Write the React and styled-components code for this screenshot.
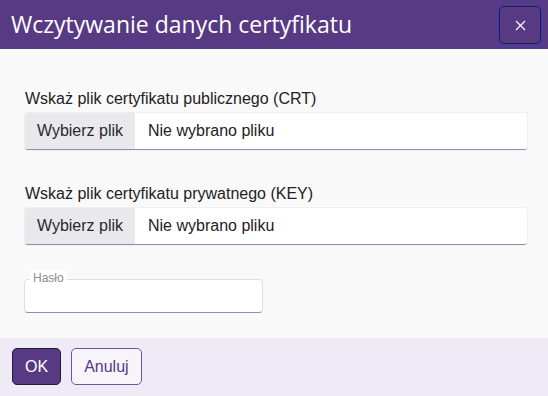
import React from "react";
import styled, {createGlobalStyle} from "styled-components";

const Global = createGlobalStyle`
	html, body {
		margin:0;
		padding:0;
		background:#f9f9f9;
	}
	body{
		font-family:"Liberation Sans", Arial, sans-serif;
	}
`;

const Dialog = styled.div`
	width:548px;
	height:396px;
	display:flex;
	flex-direction:column;
	background:#f9f9f9;
	overflow:hidden;
`;

const Header = styled.div`
	height:49px;
	background:#583a84;
	display:flex;
	align-items:center;
	justify-content:space-between;
	padding:0 7px 0 11px;
	box-sizing:border-box;
	flex-shrink:0;
`;

const Title = styled.h1`
	margin:0;
	font-family:"Open Sans", "Noto Sans", sans-serif;
	font-weight:400;
	font-size:23px;
	color:#ffffff;
	margin-top:-2px;
`;

const CloseButton = styled.button`
	width:42px;
	height:38px;
	box-sizing:border-box;
	border:1px solid #261a3a;
	border-radius:5px;
	background:#583a84;
	box-shadow:0 0 0 3px #4b3c9c;
	display:flex;
	align-items:center;
	justify-content:center;
	padding:0;
	margin-top:1px;
`;

const Body = styled.div`
	flex:1;
	padding:41px 21px 0 25px;
	display:flex;
	flex-direction:column;
`;

const Field = styled.div`
	display:flex;
	flex-direction:column;
	margin-bottom:${p => p.gap || 0}px;
`;

const Label = styled.label`
	font-size:16px;
	color:#222222;
	margin-bottom:5px;
	line-height:18px;
`;

const FileBox = styled.div`
	height:37px;
	display:flex;
	align-items:stretch;
	background:#ffffff;
	border-radius:3px;
	border-bottom:1px solid #9a88b8;
	box-shadow:0 0 0 1px #efeff2;
	box-sizing:border-box;
	overflow:hidden;
`;

const FileButton = styled.span`
	width:110px;
	background:#e9e9ed;
	display:flex;
	align-items:center;
	justify-content:center;
	font-size:16px;
	color:#2a2a2a;
`;

const FileName = styled.span`
	display:flex;
	align-items:center;
	padding-left:13px;
	font-size:16px;
	color:#222222;
`;

const PassSet = styled.fieldset`
	margin:0 0 0 -1px;
	width:239px;
	height:42px;
	box-sizing:border-box;
	padding:0 6px;
	border:1px solid #e2dcec;
	border-bottom-color:#9a88b8;
	border-radius:4px;
	background:#ffffff;
	legend{
		font-size:12px;
		color:#8a8a96;
		padding:1px 3px 2px;
		margin-left:-1px;
		background:#ffffff;
		line-height:13px;
	}
`;

const Footer = styled.div`
	height:58px;
	background:#efebf6;
	display:flex;
	align-items:center;
	gap:10px;
	padding:0 12px;
	flex-shrink:0;
`;

const Button = styled.button`
	height:37px;
	box-sizing:border-box;
	padding:0 12px;
	border-radius:5px;
	font-family:"Liberation Sans", Arial, sans-serif;
	font-size:16px;
	border:1px solid ${p => p.primary ? "#261a3a" : "#6e55a0"};
	background:${p => p.primary ? "#583a84" : "#f7f4fb"};
	color:${p => p.primary ? "#ffffff" : "#583a84"};
	margin-top:-1px;
`;

const App = () => {
	return(
		<>
		<Global/>
		<Dialog>
			<Header>
				<Title>Wczytywanie danych certyfikatu</Title>
				<CloseButton aria-label="Zamknij">
					<svg width="11" height="11" viewBox="0 0 11 11">
						<path d="M1 1 L10 10 M10 1 L1 10" stroke="#ffffff" strokeWidth="1.2"/>
					</svg>
				</CloseButton>
			</Header>
			<Body>
				<Field gap={35}>
					<Label>Wskaż plik certyfikatu publicznego (CRT)</Label>
					<FileBox>
						<FileButton>Wybierz plik</FileButton>
						<FileName>Nie wybrano pliku</FileName>
					</FileBox>
				</Field>
				<Field gap={26}>
					<Label>Wskaż plik certyfikatu prywatnego (KEY)</Label>
					<FileBox>
						<FileButton>Wybierz plik</FileButton>
						<FileName>Nie wybrano pliku</FileName>
					</FileBox>
				</Field>
				<PassSet>
					<legend>Hasło</legend>
				</PassSet>
			</Body>
			<Footer>
				<Button primary>OK</Button>
				<Button>Anuluj</Button>
			</Footer>
		</Dialog>
		</>
	);
};

export default App;
